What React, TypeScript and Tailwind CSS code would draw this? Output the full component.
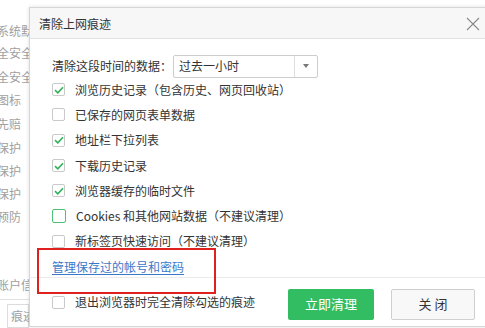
import React from 'react';

const font = {
  fontFamily: '"Microsoft YaHei", "Noto Sans CJK SC", "Noto Sans", sans-serif',
};

type Item = { id: number; label: string; checked: boolean; hover?: boolean };

const items: Item[] = [
  { id: 1, label: '浏览历史记录（包含历史、网页回收站）', checked: true },
  { id: 2, label: '已保存的网页表单数据', checked: false },
  { id: 3, label: '地址栏下拉列表', checked: true },
  { id: 4, label: '下载历史记录', checked: true },
  { id: 5, label: '浏览器缓存的临时文件', checked: true },
  { id: 6, label: 'Cookies 和其他网站数据（不建议清理）', checked: false, hover: true },
  { id: 7, label: '新标签页快速访问（不建议清理）', checked: false },
];

// faded settings page peeking out on the left
const behind = [
  { y: 'h-[22px] mt-[20px]', t: '系统默认' },
  { y: 'h-[24px]', t: '全安全' },
  { y: 'h-[23px]', t: '全安全' },
  { y: 'h-[24px]', t: '图标' },
  { y: 'h-[25px]', t: '先赔' },
  { y: 'h-[24px]', t: '保护' },
  { y: 'h-[23px]', t: '保护' },
  { y: 'h-[23px]', t: '保护' },
  { y: 'h-[25px]', t: '预防' },
];

function Checkbox({ checked, hover }: { checked: boolean; hover?: boolean }) {
  return (
    <span
      className={
        hover
          ? 'flex h-[14px] w-[14px] items-center justify-center rounded-[2px] border border-[#4cc173] bg-white'
          : 'flex h-[13px] w-[13px] items-center justify-center rounded-[2px] border border-[#c9c9c9] bg-white'
      }
    >
      {checked && (
        <svg width="10" height="8" viewBox="0 0 10 8">
          <path d="M1 4.2 L3.8 6.8 L9 1.2" fill="none" stroke="#2fb35a" strokeWidth="1.6" />
        </svg>
      )}
    </span>
  );
}

export default function App() {
  return (
    <div className="relative flex h-[328px] w-[485px] overflow-hidden bg-white text-[12px]" style={font}>
      <div className="flex w-[29px] shrink-0 flex-col overflow-hidden text-[#a0a0a0]">
        {behind.map((b, i) => (
          <div key={i} className={`${b.y} ml-[-3px] flex items-center whitespace-nowrap`}>
            {b.t}
          </div>
        ))}
        <div className="mt-[45px] flex h-[22px] items-center whitespace-nowrap ml-[-3px]">账户信息</div>
        <div className="mt-[3px] border-t border-[#e2e2e2] pt-[4px]">
          <div className="ml-[7px] flex h-[24px] items-center whitespace-nowrap border border-[#dcdcdc] pl-[3px]">
            痕迹清理
          </div>
        </div>
      </div>

      <div className="mt-[7px] flex h-[320px] w-[462px] shrink-0 flex-col border border-[#d6d6d6] bg-white shadow-[0_0_4px_rgba(0,0,0,0.12)]">
        <div className="flex h-[31px] items-center justify-between border-b border-[#e3e3e3] bg-[#f7f7f7] pl-[9px] pr-[10px] pt-[2px] text-[#333]">
          <span>清除上网痕迹</span>
          <svg width="14" height="14" viewBox="0 0 14 14">
            <path d="M1 1 L13 13 M13 1 L1 13" stroke="#8a8a8a" strokeWidth="1.1" />
          </svg>
        </div>

        <div className="flex flex-1 flex-col pl-[22px] text-[#333]">
          <div className="mt-[16px] flex h-[22px] items-center">
            <span className="w-[121px]">清除这段时间的数据：</span>
            <div className="flex h-[23px] w-[145px] items-stretch rounded-[2px] border border-[#cdcdcd]">
              <span className="flex flex-1 items-center pl-[5px]">过去一小时</span>
              <span className="flex w-[23px] items-center justify-center border-l border-[#dedede]">
                <svg width="6" height="4" viewBox="0 0 6 4">
                  <path d="M0 0 H6 L3 4 Z" fill="#777" />
                </svg>
              </span>
            </div>
          </div>

          {items.map((it) => (
            <div key={it.id} className="flex h-[25.3px] items-center gap-[10px]">
              <Checkbox checked={it.checked} hover={it.hover} />
              <span>{it.label}</span>
            </div>
          ))}

          <div className="flex h-[22px] items-center pt-[4px]">
            <span className="text-[#3c78c8] underline underline-offset-2">管理保存过的帐号和密码</span>
          </div>
        </div>

        <div className="flex h-[49px] items-center justify-between border-t border-[#ececec] pl-[22px] pr-[15px] text-[#333]">
          <div className="flex items-center gap-[10px]">
            <Checkbox checked={false} />
            <span>退出浏览器时完全清除勾选的痕迹</span>
          </div>
          <div className="flex items-center gap-[17px] pt-[4px]">
            <button className="flex h-[31px] w-[86px] items-center justify-center rounded-[2px] bg-[#33bd63] text-[13px] text-white">
              立即清理
            </button>
            <button className="flex h-[31px] w-[84px] items-center justify-center rounded-[2px] border border-[#cfcfcf] bg-[#f8f8f8] text-[13px] text-[#333]">
              关 闭
            </button>
          </div>
        </div>
      </div>

      <div className="pointer-events-none absolute left-[37px] top-[248px] h-[46px] w-[179px] border-2 border-[#e0201e]" />
    </div>
  );
}
